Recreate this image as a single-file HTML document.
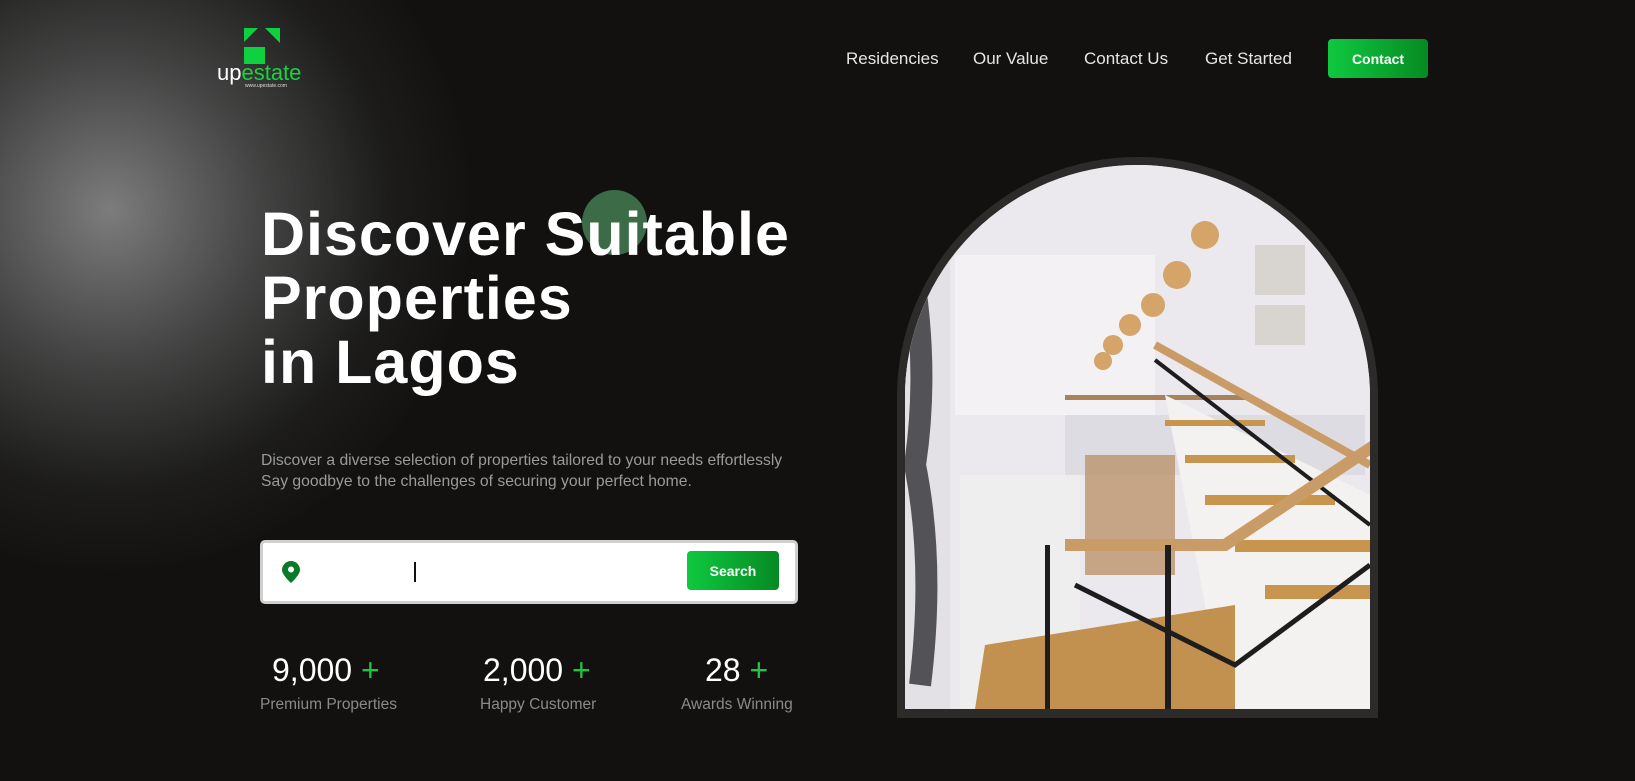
<!DOCTYPE html>
<html><head><meta charset="utf-8"><style>
*{margin:0;padding:0;box-sizing:border-box}
html,body{width:1635px;height:781px;overflow:hidden}
body{background:#121110;font-family:"Liberation Sans",sans-serif;position:relative;color:#fff}
.glow{position:absolute;left:-250px;top:-150px;width:720px;height:720px;border-radius:50%;background:radial-gradient(circle,rgba(130,130,130,.95) 0%,rgba(100,100,100,.6) 30%,rgba(60,60,60,.25) 55%,rgba(18,17,16,0) 72%)}
.abs{position:absolute}
.nav a{position:absolute;top:49px;font-size:17px;color:#e6e6e6;text-decoration:none}
.btn{background:linear-gradient(90deg,#0fc93f,#068a23);color:#fff;font-weight:bold;border-radius:4px;display:flex;align-items:center;justify-content:center}
h1{position:absolute;left:261px;top:202px;font-size:61px;line-height:64px;font-weight:bold;letter-spacing:1px}
.p{position:absolute;left:261px;top:450px;font-size:15.7px;line-height:21px;color:#9a9a9a}
.num{position:absolute;top:652px;font-size:32px;color:#fff}
.num b{color:#1ec544;font-weight:normal}
.lab{position:absolute;top:696px;font-size:15.5px;color:#8a8a8a}
</style></head><body>
<div class="glow"></div>
<svg class="abs" style="left:244px;top:28px" width="37" height="36" viewBox="0 0 37 36">
<polygon points="0,0 14,0 0,14" fill="#0fd13f"/><polygon points="21,0 36,0 36,15" fill="#0fd13f"/><rect x="0" y="19" width="21" height="17" fill="#0fd13f"/></svg>
<div class="abs" style="left:217px;top:60px;font-size:22px;letter-spacing:0"><span style="color:#fff">up</span><span style="color:#19d23f">estate</span></div>
<div class="abs" style="left:245px;top:83px;font-size:5px;color:#ddd">www.upestate.com</div>
<div class="nav"><a style="left:846px">Residencies</a><a style="left:973px">Our Value</a><a style="left:1084px">Contact Us</a><a style="left:1205px">Get Started</a></div>
<div class="btn abs" style="left:1328px;top:39px;width:100px;height:39px;font-size:14px">Contact</div>
<div class="abs" style="left:582px;top:190px;width:65px;height:65px;border-radius:50%;background:#3c6b47"></div>
<h1>Discover Suitable<br>Properties<br>in Lagos</h1>
<div class="p">Discover a diverse selection of properties tailored to your needs effortlessly<br>Say goodbye to the challenges of securing your perfect home.</div>
<div class="abs" style="left:260px;top:540px;width:538px;height:64px;background:#fff;border:3px solid #cfcfcf;border-radius:5px"></div>
<svg class="abs" style="left:282px;top:561px" width="18" height="22" viewBox="0 0 18 22"><path d="M9 0C4 0 0 4 0 9c0 5 9 13 9 13s9-8 9-13C18 4 14 0 9 0z" fill="#0a7a28"/><circle cx="9" cy="8.5" r="3" fill="#fff"/></svg>
<div class="abs" style="left:414px;top:562px;width:1.5px;height:20px;background:#111"></div>
<div class="btn abs" style="left:687px;top:551px;width:92px;height:39px;font-size:14px">Search</div>
<div class="num" style="left:272px">9,000 <b>+</b></div>
<div class="num" style="left:483px">2,000 <b>+</b></div>
<div class="num" style="left:705px">28 <b>+</b></div>
<div class="lab" style="left:260px">Premium Properties</div>
<div class="lab" style="left:480px">Happy Customer</div>
<div class="lab" style="left:681px">Awards Winning</div>
<div class="abs" style="left:897px;top:157px;width:481px;height:561px;background:#2d2b2a;border-radius:240px 240px 0 0"></div>
<div class="abs" style="left:905px;top:165px;width:465px;height:544px;border-radius:232px 232px 0 0;overflow:hidden;background:#e9e6ea">
<svg width="465" height="544" viewBox="0 0 465 544">
<rect width="465" height="544" fill="#ebe8ee"/>
<rect x="50" y="90" width="200" height="160" fill="#f3f1f4"/>
<rect x="160" y="250" width="300" height="60" fill="#dedce3"/>
<rect x="0" y="0" width="45" height="544" fill="#e3e0e6"/>
<path d="M5 90 Q25 200 10 300 Q30 400 15 520" stroke="#2e2f33" stroke-width="22" fill="none" opacity=".8"/>
<rect x="55" y="310" width="120" height="234" fill="#efeeee"/>
<rect x="180" y="290" width="90" height="120" fill="#b5895a" opacity=".7"/>
<rect x="160" y="230" width="180" height="5" fill="#a9825c"/>
<polygon points="260,230 465,330 465,544 320,544" fill="#f4f2f0"/>
<g fill="#c8954f">
<rect x="260" y="255" width="100" height="6"/><rect x="280" y="290" width="110" height="8"/><rect x="300" y="330" width="130" height="10"/><rect x="330" y="375" width="135" height="12"/><rect x="360" y="420" width="105" height="14"/></g>
<polygon points="80,480 330,440 330,544 70,544" fill="#c2914f"/>
<path d="M250 180 L465 300" stroke="#c99b66" stroke-width="8"/>
<path d="M250 195 L465 360" stroke="#1d1d1d" stroke-width="4"/>
<path d="M160 380 L320 380 L470 280" stroke="#c99b66" stroke-width="12" fill="none"/>
<path d="M170 420 L330 500 L465 400" stroke="#1d1d1d" stroke-width="5" fill="none"/>
<rect x="140" y="380" width="5" height="164" fill="#1d1d1d"/><rect x="260" y="380" width="6" height="164" fill="#1d1d1d"/>
<g fill="#d4a468"><circle cx="300" cy="70" r="14"/><circle cx="272" cy="110" r="14"/><circle cx="248" cy="140" r="12"/><circle cx="225" cy="160" r="11"/><circle cx="208" cy="180" r="10"/><circle cx="198" cy="196" r="9"/></g>
<rect x="350" y="80" width="50" height="50" fill="#d8d4d0"/><rect x="350" y="140" width="50" height="40" fill="#d8d4d0"/>
</svg></div>
</body></html>
